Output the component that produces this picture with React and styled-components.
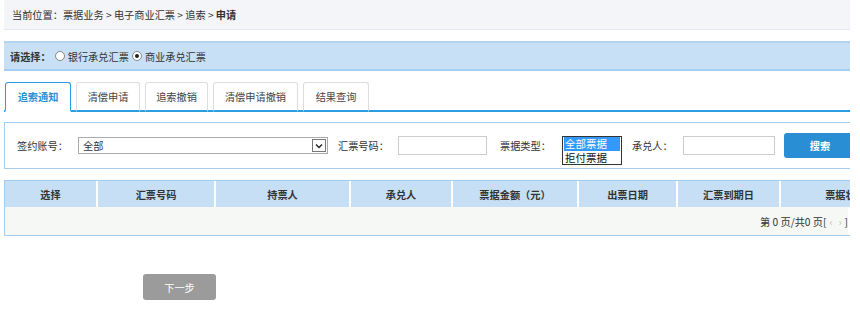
import React from 'react';
import styled, { createGlobalStyle } from 'styled-components';

const Global = createGlobalStyle`
  body {
    margin: 0;
    background: #fff;
    font-family: "Noto Sans CJK SC", "Noto Sans", sans-serif;
    font-size: 10.2px;
    color: #333;
  }
`;

const Page = styled.div`
  width: 850px;
  overflow: hidden;
`;

const Inner = styled.div`
  width: 920px;
  padding-left: 4px;
`;

const Crumb = styled.div`
  height: 29px;
  line-height: 29px;
  padding-left: 8px;
  background: #f4f5f9;
  border-bottom: 1px solid #e4e7ef;
  color: #333;
  b { font-weight: bold; }
`;

const ChoiceBar = styled.div`
  margin-top: 11px;
  height: 26px;
  display: flex;
  align-items: center;
  padding-left: 6px;
  background: #c7e0f5;
  border-top: 2px solid #b2d3ee;
  border-bottom: 2px solid #a4cff2;
`;

const ChoiceLabel = styled.span`
  font-weight: bold;
  margin-right: 2px;
`;

const Radio = styled.span`
  display: inline-block;
  width: 8px;
  height: 8px;
  border: 1px solid #888;
  border-radius: 50%;
  background: #fff;
  margin: 0 3px 0 2px;
  position: relative;
  ${p => p.checked && `
    &::after {
      content: '';
      position: absolute;
      left: 2px; top: 2px;
      width: 4px; height: 4px;
      border-radius: 50%;
      background: #222;
    }
  `}
`;

const RadioText = styled.span`
  margin-right: 1px;
`;

const Tabs = styled.div`
  margin-top: 11px;
  display: flex;
  align-items: flex-end;
  gap: 5px;
  padding-left: 1px;
  height: 28px;
  border-bottom: 2px solid #2c9de0;
`;

const Tab = styled.div`
  box-sizing: border-box;
  width: ${p => p.w}px;
  height: 30px;
  margin-bottom: -2px;
  display: flex;
  align-items: center;
  justify-content: center;
  border: 1px solid ${p => (p.active ? '#2c9de0' : '#ddd')};
  border-bottom: ${p => (p.active ? '2px solid #fff' : '2px solid #2c9de0')};
  border-radius: 3px 3px 0 0;
  background: #fff;
  color: ${p => (p.active ? '#2b8fd6' : '#444')};
  font-weight: ${p => (p.active ? 'bold' : 'normal')};
`;

const SearchPanel = styled.div`
  margin-top: 10px;
  height: 45px;
  box-sizing: content-box;
  border: 1px solid #a6cdef;
  border-right: none;
  display: flex;
  align-items: center;
  padding: 0 0 0 12px;
`;

const Label = styled.span`
  width: ${p => p.w}px;
  margin-left: ${p => p.ml || 0}px;
  color: #333;
  flex-shrink: 0;
`;

const SelectBox = styled.div`
  box-sizing: border-box;
  width: 250px;
  height: 17px;
  border: 1px solid #aaa;
  display: flex;
  align-items: center;
  padding-left: 4px;
  justify-content: space-between;
`;

const Arrow = styled.span`
  box-sizing: border-box;
  width: 14px;
  height: 13px;
  margin-right: 1px;
  border: 1px solid #777;
  display: flex;
  align-items: center;
  justify-content: center;
  background: #fff;
`;

const TextInput = styled.div`
  box-sizing: border-box;
  width: ${p => p.w}px;
  height: 19px;
  border: 1px solid #ccc;
  background: #fff;
`;

const ListBox = styled.div`
  box-sizing: border-box;
  width: 60px;
  height: 29px;
  margin-bottom: -10px;
  border: 1px solid #333;
  display: flex;
  flex-direction: column;
  padding: 0 1px;
  font-size: 10.5px;
`;

const Option = styled.div`
  height: 13.5px;
  line-height: 13.5px;
  overflow: hidden;
  white-space: nowrap;
  background: ${p => (p.selected ? '#3399ff' : 'transparent')};
  color: ${p => (p.selected ? '#fff' : '#111')};
  padding-left: 1px;
`;

const SearchButton = styled.div`
  margin-left: 9px;
  width: 72px;
  height: 25px;
  border-radius: 3px;
  background: #2a8ed5;
  color: #fff;
  font-weight: bold;
  display: flex;
  align-items: center;
  justify-content: center;
  flex-shrink: 0;
`;

const Table = styled.div`
  margin-top: 11px;
  border: 1px solid #a6cdef;
  border-right: none;
`;

const HeadRow = styled.div`
  display: flex;
  height: 26px;
  background: #c6dff5;
`;

const HeadCell = styled.div`
  width: ${p => p.w}px;
  flex-shrink: 0;
  display: flex;
  align-items: center;
  justify-content: center;
  font-weight: bold;
  border-right: 2px solid #fff;
  box-sizing: border-box;
`;

const BodyRow = styled.div`
  height: 28px;
  background: #f5f8f4;
  display: flex;
  align-items: center;
  justify-content: flex-end;
  width: 843px;
  padding-right: 0;
  box-sizing: border-box;
`;

const Pager = styled.span`
  color: #333;
  white-space: nowrap;
`;

const Dim = styled.span`
  color: #bbb;
  margin: 0 3px;
`;

const NextButton = styled.div`
  margin: 38px 0 0 139px;
  width: 73px;
  height: 26px;
  border-radius: 3px;
  background: #9b9b9b;
  color: #fff;
  display: flex;
  align-items: center;
  justify-content: center;
`;

const columns = [
  ['选择', 93],
  ['汇票号码', 118],
  ['持票人', 135],
  ['承兑人', 102],
  ['票据金额（元）', 126],
  ['出票日期', 99],
  ['汇票到期日', 103],
  ['票据状态', 131],
];

const tabs = [
  ['追索通知', 66],
  ['清偿申请', 64],
  ['追索撤销', 63],
  ['清偿申请撤销', 85],
  ['结果查询', 66],
];

export default function App() {
  return (
    <Page>
      <Global />
      <Inner>
        <Crumb>
          当前位置：票据业务 &gt; 电子商业汇票 &gt; 追索 &gt; <b>申请</b>
        </Crumb>

        <ChoiceBar>
          <ChoiceLabel>请选择：</ChoiceLabel>
          <Radio />
          <RadioText>银行承兑汇票</RadioText>
          <Radio checked />
          <RadioText>商业承兑汇票</RadioText>
        </ChoiceBar>

        <Tabs>
          {tabs.map(([t, w], i) => (
            <Tab key={t} w={w} active={i === 0}>{t}</Tab>
          ))}
        </Tabs>

        <SearchPanel>
          <Label w={61}>签约账号：</Label>
          <SelectBox>
            <span>全部</span>
            <Arrow>
              <svg width="8" height="6" viewBox="0 0 8 6">
                <path d="M1 1.5 L4 4.5 L7 1.5" fill="none" stroke="#222" strokeWidth="1.4" />
              </svg>
            </Arrow>
          </SelectBox>
          <Label w={60} ml={10}>汇票号码：</Label>
          <TextInput w={89} />
          <Label w={62} ml={13}>票据类型：</Label>
          <ListBox>
            <Option selected>全部票据</Option>
            <Option>拒付票据</Option>
          </ListBox>
          <Label w={51} ml={10}>承兑人：</Label>
          <TextInput w={92} />
          <SearchButton>搜索</SearchButton>
        </SearchPanel>

        <Table>
          <HeadRow>
            {columns.map(([t, w]) => (
              <HeadCell key={t} w={w}>{t}</HeadCell>
            ))}
          </HeadRow>
          <BodyRow>
            <Pager>
              第 0 页/共0 页[<Dim>‹</Dim><Dim>›</Dim>]
            </Pager>
          </BodyRow>
        </Table>

        <NextButton>下一步</NextButton>
      </Inner>
    </Page>
  );
}
